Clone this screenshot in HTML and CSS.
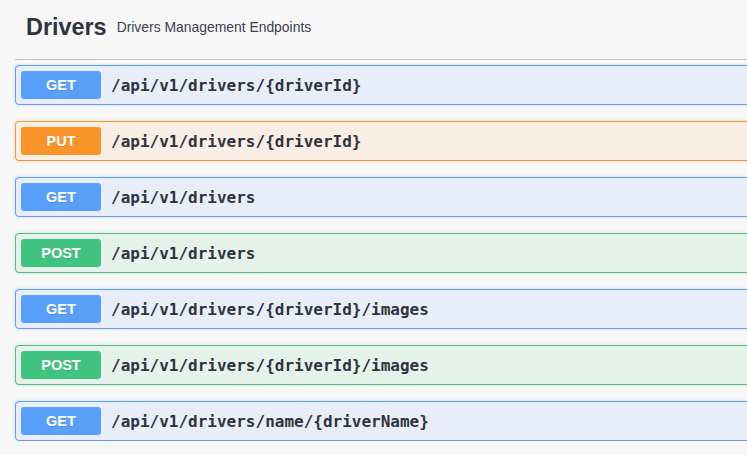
FILE: index.html
```html
<!DOCTYPE html>
<html>
<head>
<meta charset="utf-8">
<link rel="stylesheet" href="styles.css">
</head>
<body>
<div class="tag-section">
  <h3 class="tag-header">
    <span class="tag-name">Drivers</span>
    <span class="tag-desc">Drivers Management Endpoints</span>
  </h3>
  <div class="ops">
    <div class="op op-get"><span class="method">GET</span><span class="path">/api/v1/drivers/{driverId}</span></div>
    <div class="op op-put"><span class="method">PUT</span><span class="path">/api/v1/drivers/{driverId}</span></div>
    <div class="op op-get"><span class="method">GET</span><span class="path">/api/v1/drivers</span></div>
    <div class="op op-post"><span class="method">POST</span><span class="path">/api/v1/drivers</span></div>
    <div class="op op-get"><span class="method">GET</span><span class="path">/api/v1/drivers/{driverId}/images</span></div>
    <div class="op op-post"><span class="method">POST</span><span class="path">/api/v1/drivers/{driverId}/images</span></div>
    <div class="op op-get"><span class="method">GET</span><span class="path">/api/v1/drivers/name/{driverName}</span></div>
  </div>
</div>
</body>
</html>
```
FILE: styles.css
```css
html, body {
  margin: 0;
  padding: 0;
  background: #f7f7f7;
  overflow: hidden;
}
body {
  font-family: "Liberation Sans", Arial, sans-serif;
  color: #3b4151;
}
.tag-section {
  padding-left: 15px;
  width: 800px;
}
.tag-header {
  margin: 0;
  height: 44px;
  padding: 15px 0 0 11px;
  border-bottom: 1px solid rgba(59, 65, 81, 0.3);
  display: flex;
  align-items: flex-start;
  gap: 10px;
  font-weight: normal;
}
.tag-name {
  font-size: 23.4px;
  line-height: 24px;
  font-weight: 700;
  color: #2f3440;
}
.tag-desc {
  font-size: 13.9px;
  line-height: 16px;
  margin-top: 4px;
  color: #3b4151;
}
.ops {
  padding-top: 5px;
  display: flex;
  flex-direction: column;
  gap: 16px;
}
.op {
  height: 38px;
  border: 1px solid;
  border-radius: 4px;
  box-shadow: 0 0 3px rgba(0, 0, 0, 0.15);
  display: flex;
  align-items: center;
  padding-left: 5px;
}
.method {
  width: 80px;
  height: 28px;
  border-radius: 3px;
  color: #fff;
  font-weight: 700;
  font-size: 14.5px;
  display: flex;
  align-items: center;
  justify-content: center;
  text-shadow: 0 1px 0 rgba(0, 0, 0, 0.1);
}
.path {
  margin-left: 10px;
  font-family: "DejaVu Sans Mono", "Liberation Mono", monospace;
  font-weight: 700;
  font-size: 16px;
  color: #2f3440;
}
.op-get { background: #e8eef9; border-color: #5b9ff9; }
.op-get .method { background: #59a0fa; }
.op-put { background: #f9eee3; border-color: #f9952d; }
.op-put .method { background: #f99429; }
.op-post { background: #e5f2ea; border-color: #47c382; }
.op-post .method { background: #41c37f; }
```
